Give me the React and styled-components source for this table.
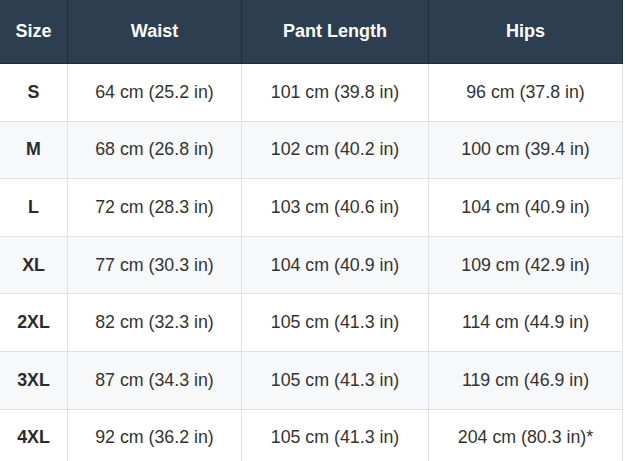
import React from "react";
import styled, { createGlobalStyle } from "styled-components";

const GlobalStyle = createGlobalStyle`
  body {
    margin: 0;
    background: #ffffff;
    font-family: "Helvetica Neue", "Liberation Sans", Arial, sans-serif;
  }
`;

// size chart rows: size, waist, pant length, hips
const rows = [
  ["S", "64 cm (25.2 in)", "101 cm (39.8 in)", "96 cm (37.8 in)"],
  ["M", "68 cm (26.8 in)", "102 cm (40.2 in)", "100 cm (39.4 in)"],
  ["L", "72 cm (28.3 in)", "103 cm (40.6 in)", "104 cm (40.9 in)"],
  ["XL", "77 cm (30.3 in)", "104 cm (40.9 in)", "109 cm (42.9 in)"],
  ["2XL", "82 cm (32.3 in)", "105 cm (41.3 in)", "114 cm (44.9 in)"],
  ["3XL", "87 cm (34.3 in)", "105 cm (41.3 in)", "119 cm (46.9 in)"],
  ["4XL", "92 cm (36.2 in)", "105 cm (41.3 in)", "204 cm (80.3 in)*"],
];

const columns = [
  { label: "Size", width: 68 },
  { label: "Waist", width: 174 },
  { label: "Pant Length", width: 187 },
  { label: "Hips", width: 194 },
];

const App = () => {
  return (
    <>
      <GlobalStyle />
      <Wrapper>
        <Table>
          <colgroup>
            {columns.map((col) => (
              <col key={col.label} style={{ width: col.width }} />
            ))}
          </colgroup>
          <thead>
            <tr>
              {columns.map((col) => (
                <HeadCell key={col.label}>{col.label}</HeadCell>
              ))}
            </tr>
          </thead>
          <tbody>
            {rows.map((row, index) => (
              <Row key={row[0]} $striped={index % 2 === 1}>
                {row.map((value, i) => (
                  <Cell key={i} $bold={i === 0}>
                    {value}
                  </Cell>
                ))}
              </Row>
            ))}
          </tbody>
        </Table>
      </Wrapper>
    </>
  );
};

export default App;

const Wrapper = styled.div`
  width: 625px;
  height: 461px;
  overflow: hidden;
`;

const Table = styled.table`
  border-collapse: collapse;
  table-layout: fixed;
  width: 624px;
  margin: -1px 0 0 -1px;
`;

const HeadCell = styled.th`
  height: 63px;
  padding: 0;
  background: #2c3e50;
  color: #ffffff;
  font-size: 18px;
  font-weight: 700;
  text-align: center;
  border: 1px solid #1f2e3d;
`;

const Row = styled.tr`
  height: 57.6px;
  background: ${(p) => (p.$striped ? "#f7f8fa" : "#ffffff")};
`;

const Cell = styled.td`
  padding: 0;
  text-align: center;
  font-size: 17.8px;
  color: ${(p) => (p.$bold ? "#2b2b2b" : "#333333")};
  font-weight: ${(p) => (p.$bold ? 700 : 400)};
  border: 1px solid #dfe1e4;
`;
